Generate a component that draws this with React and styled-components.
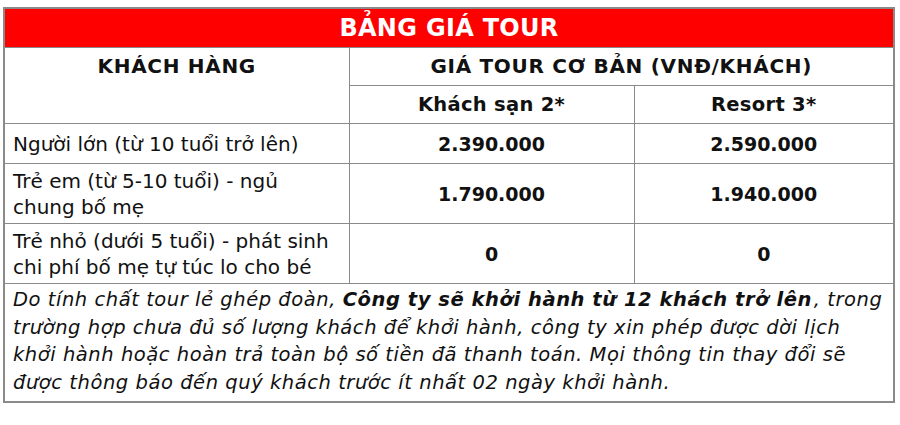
import React from "react";
import styled, { createGlobalStyle } from "styled-components";

const GlobalStyle = createGlobalStyle`
  html, body {
    margin: 0;
    padding: 0;
    background: #fff;
  }
  body {
    font-family: "DejaVu Sans", "Liberation Sans", sans-serif;
    color: #111;
  }
`;

const rows = [
  { label: "Người lớn (từ 10 tuổi trở lên)", hotel: "2.390.000", resort: "2.590.000", h: 39 },
  { label: "Trẻ em (từ 5-10 tuổi) - ngủ chung bố mẹ", hotel: "1.790.000", resort: "1.940.000", h: 59 },
  { label: "Trẻ nhỏ (dưới 5 tuổi) - phát sinh chi phí bố mẹ tự túc lo cho bé", hotel: "0", resort: "0", h: 59 },
];

const App = () => {
  return (
    <>
      <GlobalStyle />
      <StyledPage>
        <StyledTable>
          <colgroup>
            <col style={{ width: 345 }} />
            <col style={{ width: 285 }} />
            <col style={{ width: 260 }} />
          </colgroup>
          <tbody>
            <tr>
              <StyledTitle colSpan={3}>BẢNG GIÁ TOUR</StyledTitle>
            </tr>
            <tr>
              <StyledHead rowSpan={2} $valign="top">KHÁCH HÀNG</StyledHead>
              <StyledHead colSpan={2}>GIÁ TOUR CƠ BẢN (VNĐ/KHÁCH)</StyledHead>
            </tr>
            <tr>
              <StyledSubHead>Khách sạn 2*</StyledSubHead>
              <StyledSubHead>Resort 3*</StyledSubHead>
            </tr>
            {rows.map((r) => (
              <tr key={r.label}>
                <StyledLabel $h={r.h}>{r.label}</StyledLabel>
                <StyledPrice>{r.hotel}</StyledPrice>
                <StyledPrice>{r.resort}</StyledPrice>
              </tr>
            ))}
            <tr>
              <StyledNote colSpan={3}>
                Do tính chất tour lẻ ghép đoàn,{" "}
                <strong>Công ty sẽ khởi hành từ 12 khách trở lên</strong>, trong
                trường hợp chưa đủ số lượng khách để khởi hành, công ty xin phép
                được dời lịch khởi hành hoặc hoàn trả toàn bộ số tiền đã thanh
                toán. Mọi thông tin thay đổi sẽ được thông báo đến quý khách
                trước ít nhất 02 ngày khởi hành.
              </StyledNote>
            </tr>
          </tbody>
        </StyledTable>
      </StyledPage>
    </>
  );
};

const StyledPage = styled.div`
  padding: 7px 7px 0 3px;
`;

const StyledTable = styled.table`
  width: 890px;
  table-layout: fixed;
  border-collapse: collapse;
  border: 2px solid #8a8a8a;

  td {
    border: 1.5px solid #8a8a8a;
    padding: 0;
  }
`;

const StyledTitle = styled.td`
  height: 38px;
  background: #fe0000;
  color: #fff;
  text-align: center;
  font-weight: bold;
  font-size: 24px;
  letter-spacing: 0.3px;
`;

const StyledHead = styled.td`
  height: 37px;
  text-align: center;
  vertical-align: ${(p) => (p.$valign === "top" ? "top" : "middle")};
  line-height: 37px;
  font-weight: bold;
  font-size: 20px;
  letter-spacing: 0.7px;
`;

const StyledSubHead = styled.td`
  height: 37px;
  text-align: center;
  font-weight: bold;
  font-size: 19.5px;
  letter-spacing: 0.3px;
`;

const StyledLabel = styled.td`
  height: ${(p) => p.$h}px;
  td& {
    padding: 0 8px;
  }
  font-size: 20px;
  line-height: 26px;
`;

const StyledPrice = styled.td`
  text-align: center;
  font-weight: bold;
  font-size: 19px;
`;

const StyledNote = styled.td`
  td& {
    padding: 2px 8px 4px;
  }
  font-style: italic;
  font-size: 19.5px;
  line-height: 27.7px;
  letter-spacing: 0.55px;

  strong {
    font-weight: bold;
    padding-right: 2px;
  }
`;

export default App;
